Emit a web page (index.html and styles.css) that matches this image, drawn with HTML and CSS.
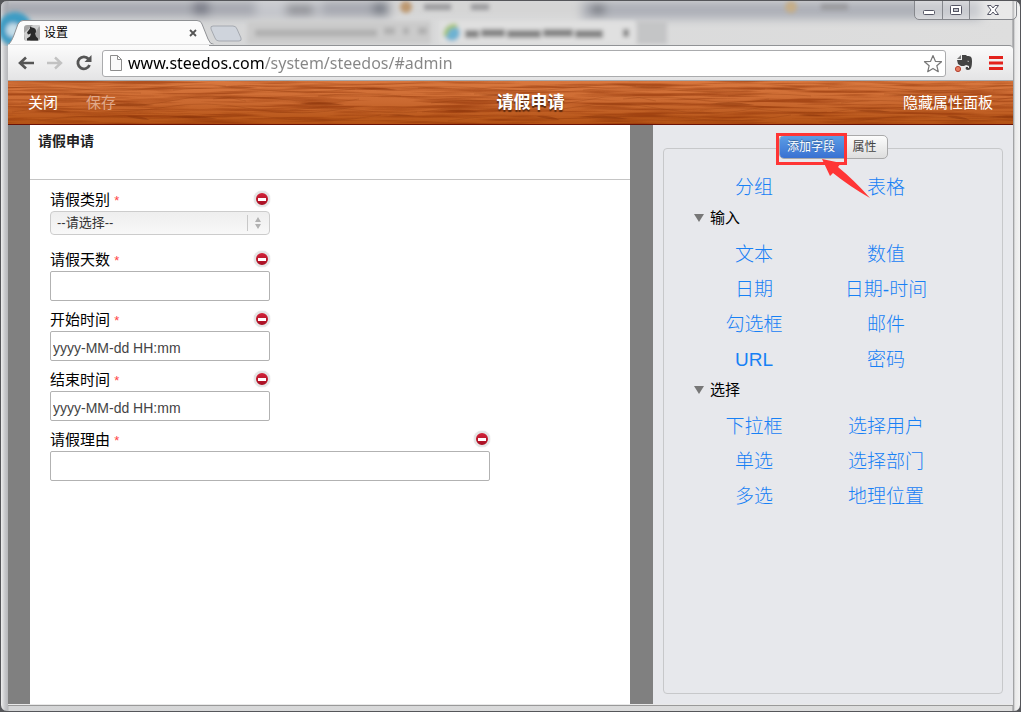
FILE: index.html
```html
<!DOCTYPE html>
<html lang="zh-CN">
<head>
<meta charset="utf-8">
<title>设置</title>
<link rel="stylesheet" href="styles.css">
</head>
<body>
<div class="window">
  <svg class="glass" aria-hidden="true">
    <defs>
      <filter id="soft" x="-20%" y="-50%" width="140%" height="200%"><feGaussianBlur stdDeviation="5"/></filter>
      <filter id="haze" x="-20%" y="-50%" width="140%" height="200%"><feGaussianBlur stdDeviation="2"/></filter>
    </defs>
    <g filter="url(#soft)">
      <rect x="0" y="0" width="390" height="16" fill="#a6a8b0"/>
      <rect x="255" y="0" width="65" height="14" fill="#c6c8ce"/>
      <rect x="390" y="0" width="190" height="14" fill="#d4d4d4"/>
      <rect x="580" y="0" width="400" height="18" fill="#adb0b8"/>
      <rect x="192" y="0" width="16" height="14" fill="#777985"/>
      <rect x="285" y="4" width="28" height="9" fill="#85868c"/>
      <rect x="372" y="2" width="14" height="11" fill="#70747f"/>
      <rect x="590" y="4" width="14" height="9" fill="#6d7078"/>
    </g>
    <g filter="url(#haze)">
      <circle cx="14" cy="28" r="17" fill="#3d9cc4"/>
      <circle cx="12" cy="29" r="7" fill="#c5dde8"/>
      <rect x="246" y="20" width="184" height="23" fill="#cbcbcb"/>
      <rect x="438" y="20" width="196" height="23" fill="#e0e0e0"/>
      <rect x="636" y="20" width="30" height="23" fill="#c4c5c6"/>
      <circle cx="405" cy="6" r="6" fill="#bd9870"/>
      <path d="M423 6h27M470 6h18M820 6h27" stroke="#9a9a9d" stroke-width="6"/>
      <circle cx="790" cy="6" r="6" fill="#c6ae88"/>
      <path d="M254 32H376M383 30h11M402 30h6M417 30h9" stroke="#b0b0b0" stroke-width="7"/>
      <circle cx="451" cy="32" r="8" fill="#6eb2d2"/>
      <path d="M444 35q2-12 12-10" stroke="#a8c568" stroke-width="4" fill="none"/>
      <path d="M464 33h14M480 32h24M506 33h34M542 32h30M574 33h28M622 32h6" stroke="#858585" stroke-width="8"/>
    </g>
  </svg>
  <div class="strip">
    <div class="tab">
      <svg class="tab-shape" viewBox="0 0 206 25" preserveAspectRatio="none" aria-hidden="true">
        <path d="M0 25C3 22 4 20 6 15L10 4Q12 .5 15 .5H189Q193 .5 194 4L200 19Q202 24.500 206 24.500V25Z" fill="#fbfbfb" stroke="#8f9194"/>
        <path d="M0 25H206" stroke="#fbfbfb" stroke-width="1"/>
      </svg>
      <svg class="favicon" viewBox="0 0 16 16" aria-hidden="true">
        <rect width="16" height="16" rx="3" fill="#a5a5a5"/><path d="M0 8L9 0H16L6 16H1Z" fill="#d0d0d0"/>
        <path d="M3 15.500v-2l3-2 1-3-3 1-1-2 3-4V1.500l2 1c4 0 5 4 3 6l1 3 2 2v2Z" fill="#2a2a2a"/>
      </svg>
      <span class="tab-title">设置</span>
      <button class="tab-close" aria-label="关闭标签页"><svg viewBox="0 0 8 8" width="8" height="8"><path d="M1 1l6 6M7 1L1 7" stroke="#555" stroke-width="1.800"/></svg></button>
    </div>
    <button class="new-tab" aria-label="新标签页"><svg viewBox="0 0 34 17" width="34" height="17"><path d="M4 1H24Q27 1 28 4L32 13Q33 16 30 16H10Q7 16 6 13L2 4Q1 1 4 1Z" fill="#cfd4dc" stroke="#a5a9b0"/></svg></button>
    <div class="win-buttons">
      <button aria-label="最小化"><svg viewBox="0 0 14 12" width="14" height="12"><rect x="1.500" y="6.500" width="11" height="4" rx="1" fill="#fff" stroke="#555665"/></svg></button>
      <button aria-label="最大化"><svg viewBox="0 0 14 12" width="14" height="12"><rect x="1.500" y="1.500" width="11" height="9" rx="1" fill="#fff" stroke="#555665"/><rect x="4.500" y="4.500" width="5" height="3" fill="#c4c6cc" stroke="#555665"/></svg></button>
      <button class="win-close" aria-label="关闭窗口"><svg viewBox="0 0 14 12" width="14" height="12"><path d="M1.500 1.500H5L7 4 9 1.500h3.500L9 6l3.500 4.500H9L7 8l-2 2.500H1.500L5 6Z" fill="#fff" stroke="#555665"/></svg></button>
    </div>
  </div>
  <div class="toolbar">
    <button class="nav" aria-label="后退"><svg viewBox="0 0 16 14" width="16" height="14"><path d="M16 7H3M8 1.500L2 7l6 5.500" fill="none" stroke="#555" stroke-width="2.600"/></svg></button>
    <button class="nav" aria-label="前进" disabled><svg viewBox="0 0 16 14" width="16" height="14"><path d="M0 7H13M8 1.500L14 7l-6 5.500" fill="none" stroke="#c2c2c2" stroke-width="2.400"/></svg></button>
    <button class="nav" aria-label="刷新"><svg viewBox="0 0 16 16" width="16" height="16"><path d="M12.500 4A6 6 0 1 0 13.500 10" fill="none" stroke="#555" stroke-width="2.800"/><path d="M15.500 0V7H8.500Z" fill="#555"/></svg></button>
    <div class="address">
      <svg viewBox="0 0 12 16" width="12" height="16" aria-hidden="true"><path d="M.5 .5H7.500L11.500 4.500V15.500H.5ZM7.500 .5V4.500H11.500" fill="#fafafa" stroke="#8c8c8c"/></svg>
      <input class="url" type="text" aria-label="地址" value="www.steedos.com/system/steedos/#admin">
      <button class="star" aria-label="收藏"><svg viewBox="0 0 20 19" width="20" height="19"><path d="M10 1.500l2.400 5.800 6.100.4-4.700 4 1.500 6-5.300-3.300L4.700 17.700l1.500-6-4.700-4 6.100-.4Z" fill="#fff" stroke="#777" stroke-width="1.200" stroke-linejoin="round"/></svg></button>
    </div>
    <button class="ext" aria-label="剪藏"><svg viewBox="0 0 18 18" width="18" height="18"><path d="M6 1V5H2Z" fill="#777"/><path d="M2 6H7V1h4l1 1c4 0 5 1 5 5 0 6-1 9-4 9-2 0-3-1-2-3h2v1h1v-2l-3-1c-1 1-3 1-5 1L3 10Z" fill="#444"/><path d="M12 7q2-1 2 1Z" fill="#ddd"/><circle cx="3" cy="15" r="2.600" fill="#e87b61" stroke="#b34432"/></svg></button>
    <button class="menu" aria-label="菜单"><svg viewBox="0 0 14 14" width="14" height="14"><path d="M0 1.500H14M0 7H14M0 12.500H14" stroke="#e3221c" stroke-width="3"/></svg></button>
  </div>
  <header class="app-bar">
    <svg class="wood" aria-hidden="true">
      <defs>
        <linearGradient id="woodShade" x2="0" y2="1"><stop offset="0" stop-color="#d9783f"/><stop offset=".5" stop-color="#ca6930"/><stop offset="1" stop-color="#b35214"/></linearGradient>
        <filter id="fiber" x="0" y="0" width="100%" height="100%" color-interpolation-filters="sRGB"><feTurbulence type="fractalNoise" baseFrequency=".012 .32" numOctaves="3" seed="8"/><feColorMatrix values="0 0 0 0 .56  0 0 0 0 .2  0 0 0 0 .03  3 0 0 0 -1.250"/></filter>
        <pattern id="grain" width="410" height="43" patternUnits="userSpaceOnUse">
          <g fill="none" stroke="#8f3a0c" stroke-opacity=".28">
            <path d="M0 7Q36 4 72 8T150 7 218 5M56 13Q94 10 133 12M165 9q43-4 88 0t94-1M310 15q35-4 83 0M13 22q40-5 79 0t76-3 70 1M205 18q37-4 76 1t70-1M4 31q34-6 75-2t79-3 87 2 101-2M30 40q43-7 78-4t84 0 88 2 93-4M282 29q33-4 67 0t60 2"/>
          </g>
          <g fill="#8a3409" fill-opacity=".5">
            <path d="M95 24q24-4 52 0-27 3-52 0M210 6q15-2 40 1-20 1-40-1M291 23q21-4 46 1-24 2-46-1M26 30q17-3 37 1-17 1-37-1M160 36q22-4 50 2-25 0-50-2M348 8q20-3 42 1-18 1-42-1M118 35q14-1 24 4-16-1-24-4M60 14q22-2 40 0-20 2-40 0M380 34q12-2 28 1-12 1-28-1"/>
          </g>
        </pattern>
      </defs>
      <rect width="100%" height="100%" fill="url(#woodShade)"/>
      <rect width="100%" height="100%" filter="url(#fiber)" opacity=".6"/>
      <rect width="100%" height="100%" fill="url(#grain)"/>
    </svg>
    <div class="bar-actions"><button>关闭</button><button disabled>保存</button></div>
    <h1>请假申请</h1>
    <button>隐藏属性面板</button>
  </header>
  <div class="workspace">
    <main class="sheet">
      <h2>请假申请</h2>
      <form class="fields">
        <div class="field">
          <div class="field-head"><label for="kind">请假类别 <span class="req">*</span></label><button type="button" class="remove" aria-label="删除请假类别"></button></div>
          <div class="select-wrap"><select id="kind"><option>--请选择--</option></select><svg class="arrows" viewBox="0 0 6 12" width="6" height="12" aria-hidden="true"><path d="M3 0L6 5H0ZM0 7H6L3 12Z" fill="#b2b2b2"/></svg></div>
        </div>
        <div class="field">
          <div class="field-head"><label for="days">请假天数 <span class="req">*</span></label><button type="button" class="remove" aria-label="删除请假天数"></button></div>
          <input id="days" type="text">
        </div>
        <div class="field">
          <div class="field-head"><label for="start">开始时间 <span class="req">*</span></label><button type="button" class="remove" aria-label="删除开始时间"></button></div>
          <input id="start" type="text" value="yyyy-MM-dd HH:mm">
        </div>
        <div class="field">
          <div class="field-head"><label for="end">结束时间 <span class="req">*</span></label><button type="button" class="remove" aria-label="删除结束时间"></button></div>
          <input id="end" type="text" value="yyyy-MM-dd HH:mm">
        </div>
        <div class="field wide">
          <div class="field-head"><label for="reason">请假理由 <span class="req">*</span></label><button type="button" class="remove" aria-label="删除请假理由"></button></div>
          <input id="reason" type="text">
        </div>
      </form>
    </main>
    <aside class="panel">
      <div class="palette">
        <div class="switch">
          <button class="on">添加字段</button><button>属性</button>
          <div class="mark"></div>
          <svg class="pointer" viewBox="0 0 50 40" width="50" height="40" aria-hidden="true"><path d="M1 0L20 4L17 8Q33 21 49 39Q28 27 12 14L9 17Z" fill="#ff3535"/></svg>
        </div>
        <div class="links"><a href="#">分组</a><a href="#">表格</a></div>
        <h3>输入</h3>
        <div class="links"><a href="#">文本</a><a href="#">数值</a><a href="#">日期</a><a href="#">日期-时间</a><a href="#">勾选框</a><a href="#">邮件</a><a href="#">URL</a><a href="#">密码</a></div>
        <h3>选择</h3>
        <div class="links"><a href="#">下拉框</a><a href="#">选择用户</a><a href="#">单选</a><a href="#">选择部门</a><a href="#">多选</a><a href="#">地理位置</a></div>
      </div>
    </aside>
  </div>
</div>
</body>
</html>
```
FILE: styles.css
```css
* { box-sizing: border-box; }
body {
  margin: 0;
  background: #55565a;
  font: 15px/20px "Liberation Sans", "Noto Sans CJK SC", sans-serif;
  color: #000;
}
button {
  padding: 0;
  border: 0;
  background: none;
  color: inherit;
  font: inherit;
}
svg { display: block; }

.window {
  position: relative;
  display: flex;
  flex-direction: column;
  min-height: 100vh;
  padding: 0 7px 6px;
  border: 1px solid #55565a;
  border-radius: 7px;
  background: linear-gradient(90deg, #eee 0, #c6c7ca 4px, #b6b7ba 7px, #d4d5d6 8px, #dedede calc(100% - 8px), #8b8c8f calc(100% - 7px), #e9e9e9 calc(100% - 5px), #f4f4f4);
  overflow: hidden;
}
.glass {
  position: absolute;
  top: 0;
  left: 0;
  width: 100%;
  height: 45px;
}

.strip {
  position: relative;
  display: flex;
  height: 44px;
  padding-top: 19px;
}
.tab {
  position: relative;
  display: flex;
  align-items: center;
  width: 206px;
  height: 25px;
  padding: 0 19px 0 16px;
}
.tab-shape { position: absolute; inset: 0; width: 100%; height: 100%; }
.favicon { position: relative; width: 16px; height: 16px; }
.tab-title { position: relative; flex: 1; margin-left: 4px; font-size: 12px; }
.tab-close { position: relative; margin-right: -6px; width: 16px; height: 16px; display: grid; place-items: center; }
.new-tab { height: 17px; margin: 5px 0 0 -5px; }
.win-buttons {
  display: flex;
  height: 20px;
  margin: -20px -4px 0 auto;
  border: 1px solid #85878c;
  border-radius: 0 0 5px 5px;
  background: #ffffff55;
}
.win-buttons button { display: grid; place-items: center; width: 27px; }
.win-buttons button + button { border-left: 1px solid #85878c; }
.win-buttons .win-close { width: 47px; }

.toolbar {
  position: relative;
  display: flex;
  align-items: center;
  height: 36px;
  padding: 0 9px 0 10px;
  border-top: 1px solid #909295;
  border-bottom: 1px solid #a5a8ab;
  border-radius: 0 4px 0 0;
  background: linear-gradient(#fbfbfb, #e4e4e5);
}
.toolbar::before {
  content: "";
  position: absolute;
  top: -1px;
  left: 0;
  width: 201px;
  height: 1px;
  background: #fbfbfb;
}
.nav { width: 16px; margin-right: 13px; }
.address {
  display: flex;
  flex: 1;
  align-items: center;
  min-width: 0;
  height: 27px;
  margin-left: -3px;
  padding: 0 2px 0 7px;
  border: 1px solid #aaabad;
  border-radius: 3px;
  background: #fff;
}
.url {
  flex: 1;
  min-width: 0;
  height: 25px;
  margin-left: 6px;
  padding: 0;
  border: 0;
  outline: 0;
  background: linear-gradient(90deg, #000 136px, #858585 136px);
  background-clip: text;
  -webkit-background-clip: text;
  color: transparent;
  font: 16px/25px "Noto Sans", sans-serif;
}
.ext { margin: 0 16px 0 9px; }
.menu { margin-right: 1px; }

.app-bar {
  position: relative;
  display: grid;
  grid-template-columns: auto 1fr auto;
  align-items: center;
  height: 44px;
  padding: 0 20px;
  border-bottom: 1px solid #6b1206;
  color: #fff;
}
.app-bar > * { position: relative; }
.app-bar .wood { position: absolute; inset: 0; width: 100%; height: 100%; }
.bar-actions { display: flex; gap: 28px; padding-right: 42px; }
.app-bar button:disabled { color: #e0a98b; }
h1 {
  margin: 0;
  font-size: 17px;
  line-height: 24px;
  text-align: center;
  text-shadow: 0 2px 1px #5c2b10;
}

.workspace {
  display: grid;
  grid-template-columns: minmax(0, 1fr) 360px;
  flex: 1;
  border-bottom: 1px solid #e9e9e9;
  box-shadow: 0 1px #999;
}
.sheet {
  border: solid #808080;
  border-width: 0 23px 0 22px;
  background: #fff;
}
h2 {
  height: 55px;
  margin: 0;
  padding: 6px 8px;
  border-bottom: 1px solid #c5c5c5;
  color: #222;
  font-size: 14px;
  line-height: 20px;
}
.fields { padding: 10px 20px; }
.field { width: 220px; height: 60px; }
.field.wide { width: 440px; }
.field-head { display: flex; justify-content: space-between; height: 21px; }
.req { color: #f44; font-size: 13px; }
.remove {
  width: 16px;
  height: 16px;
  margin-top: 1px;
  border: 2px solid #e4e4e4;
  border-radius: 50%;
  background: linear-gradient(#fff, #fff) center / 8px 3px no-repeat, linear-gradient(#d3243a, #a50d20);
  box-shadow: 0 0 1px #aaa;
}
.field input {
  width: 100%;
  height: 30px;
  padding: 4px 2px 0;
  border: 1px solid #b2b2b2;
  border-radius: 2px;
  background: #fff;
  color: #444;
  font: 14px/20px "Liberation Sans", sans-serif;
}
.select-wrap { position: relative; }
.field select {
  display: block;
  appearance: none;
  width: 100%;
  height: 24px;
  padding: 0 26px 0 6px;
  border: 1px solid #ccc;
  border-radius: 4px;
  background: linear-gradient(#c8c8c8, #c8c8c8) right 21px center / 1px 16px no-repeat, linear-gradient(#eee, #f8f8f8);
  color: #333;
  font: 13px/20px "Liberation Sans", "Noto Sans CJK SC", sans-serif;
}
.arrows { position: absolute; top: 6px; right: 9px; pointer-events: none; }

.panel { padding: 23px 10px 10px; background: #e7e8ec; }
.palette {
  height: 100%;
  padding: 0 50px 0 24px;
  border: 1px solid #c7c8ca;
  border-radius: 4px;
}
.switch {
  position: relative;
  display: flex;
  width: 109px;
  height: 24px;
  margin: -14px auto 11px 91px;
  border: 1px solid #a9a9aa;
  border-radius: 5px;
  background: linear-gradient(#fcfcfc, #dedede);
  color: #444;
  font-size: 12px;
}
.switch button { flex: 1; padding-right: 4px; }
.switch .on {
  flex: 0 0 66px;
  border-radius: 4px 0 0 4px;
  background: linear-gradient(#5c9de5, #3971d2);
  color: #fff;
  text-shadow: 0 -1px 1px #0005;
}
.mark { position: absolute; top: -3px; left: -4px; width: 71px; height: 32px; border: 3px solid #ff3535; }
.pointer { position: absolute; top: 23px; left: 41px; z-index: 1; }
.links { display: grid; grid-template-columns: 1fr 1fr; }
.links a {
  color: #1780f5;
  font-size: 19px;
  line-height: 35px;
  text-align: center;
  text-decoration: none;
  font-weight: 300;
}
h3 {
  display: flex;
  align-items: center;
  gap: 6px;
  height: 25px;
  margin: 0 0 7px;
  padding-left: 6px;
  font-size: 15px;
  font-weight: 400;
}
.links + h3::before {
  content: "";
  border: solid transparent;
  border-width: 8px 5px 0;
  border-top-color: #777;
}
```
